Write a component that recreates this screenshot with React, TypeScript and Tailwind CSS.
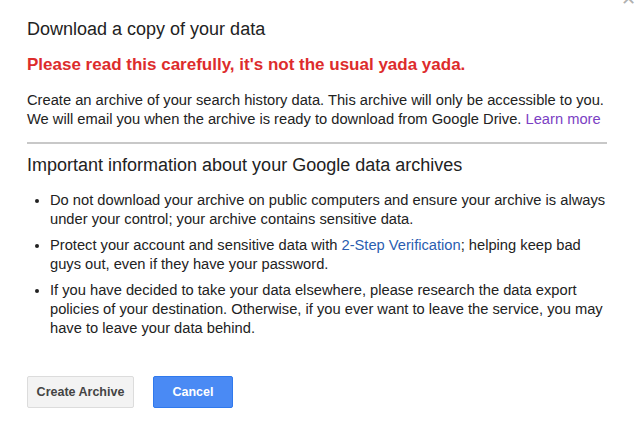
import React from "react";

export default function App() {
  return (
    <div className="relative w-[640px] h-[422px] bg-white overflow-hidden" style={{ fontFamily: '"Liberation Sans", Arial, sans-serif' }}>
      <div className="absolute right-[4px] top-[-10px] text-[#b0b0b0] text-[18px] leading-none">✕</div>
      <div className="pl-[27px] pr-[32px] pt-[17px]">
        <h1 className="text-[18px] leading-[24px] text-[#222222]">Download a copy of your data</h1>
        <p className="mt-[14px] text-[17px] leading-[20px] font-bold text-[#dd2c2c]">Please read this carefully, it's not the usual yada yada.</p>
        <p className="mt-[16px] text-[14.7px] leading-[19px] text-[#222222] whitespace-nowrap">
          Create an archive of your search history data. This archive will only be accessible to you.
          <br />
          We will email you when the archive is ready to download from Google Drive. <span className="text-[#7b3fc4]">Learn more</span>
        </p>
        <div className="mt-[13px] h-[2px] bg-[#c8c8c8] mr-[1px]" />
        <h2 className="mt-[9px] text-[18px] leading-[24px] text-[#222222]">Important information about your Google data archives</h2>
        <ul className="mt-[14px] text-[14.7px] leading-[19px] text-[#222222] list-disc pl-[23px]">
          <li>Do not download your archive on public computers and ensure your archive is always under your control; your archive contains sensitive data.</li>
          <li className="mt-[7px]">Protect your account and sensitive data with <span className="text-[#2a5db0]">2-Step Verification</span>; helping keep bad guys out, even if they have your password.</li>
          <li className="mt-[7px]">If you have decided to take your data elsewhere, please research the data export policies of your destination. Otherwise, if you ever want to leave the service, you may have to leave your data behind.</li>
        </ul>
        <div className="mt-[38px] flex gap-[19px]">
          <button className="w-[107px] h-[32px] rounded-[2px] border border-[#dcdcdc] bg-[#f3f3f3] text-[12.5px] font-bold text-[#444444]">Create Archive</button>
          <button className="w-[80px] h-[32px] rounded-[2px] border border-[#3079ed] bg-[#4a8af4] text-[12.5px] font-bold text-white">Cancel</button>
        </div>
      </div>
    </div>
  );
}
